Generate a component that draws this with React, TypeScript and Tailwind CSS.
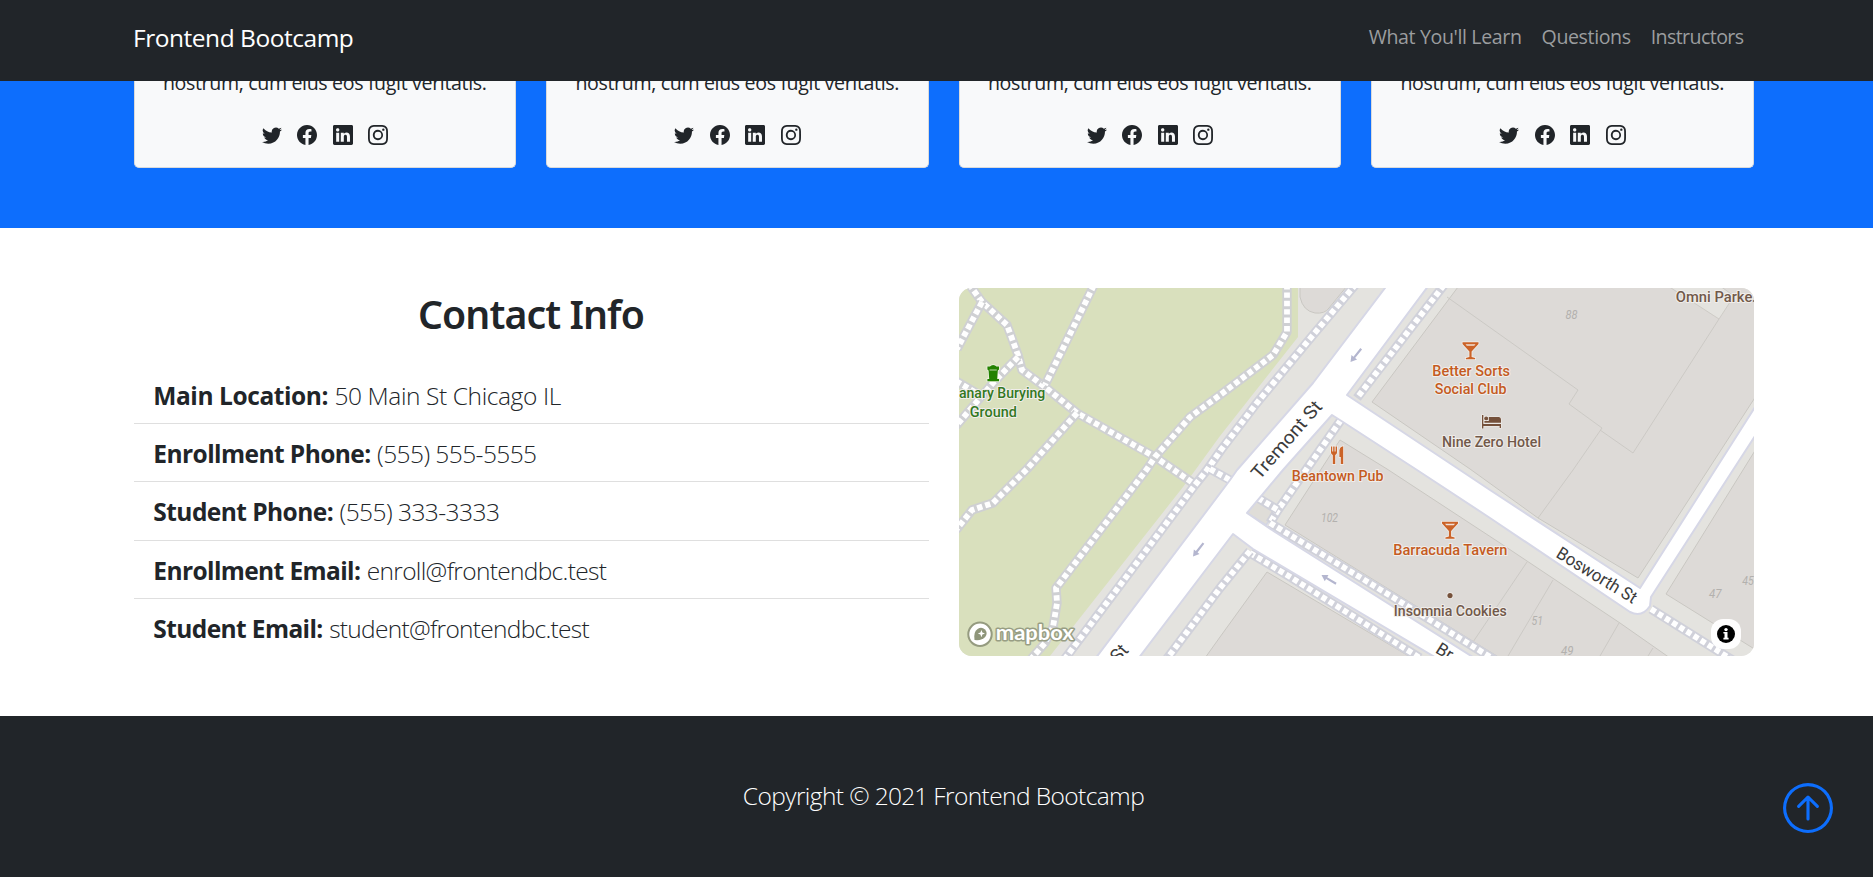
import React from "react";
import {
  BsTwitter,
  BsFacebook,
  BsLinkedin,
  BsInstagram,
  BsArrowUpCircle,
} from "react-icons/bs";

const contacts = [
  { label: "Main Location:", value: "50 Main St Chicago IL", labelTracking: "tracking-[-0.42px]", valueTracking: "tracking-[-0.4px]" },
  { label: "Enrollment Phone:", value: "(555) 555-5555", labelTracking: "tracking-[-0.56px]", valueTracking: "tracking-[-0.57px]" },
  { label: "Student Phone:", value: "(555) 333-3333", labelTracking: "tracking-[-0.55px]", valueTracking: "tracking-[-0.54px]" },
  { label: "Enrollment Email:", value: "enroll@frontendbc.test", labelTracking: "tracking-[-0.6px]", valueTracking: "tracking-[-0.67px]" },
  { label: "Student Email:", value: "student@frontendbc.test", labelTracking: "tracking-[-0.6px]", valueTracking: "tracking-[-0.71px]" },
];

const footpaths = [
  "M969 284 L982 302 L1007 325 L1018 355 L1022 370 L1045 387 L1077 413 L1155 457 L1193 483",
  "M982 302 L957 349",
  "M1018 357 L993 383 L956 426",
  "M956 381 L978 394",
  "M1094 285 L1045 385",
  "M1077 413 L1027 469 L993 503 L972 510 L956 530",
  "M1287 284 L1287 332 L1273 355 L1220 395 L1190 417 L1155 457 L1147 469 L1056 588 L1057 603 L1053 627 L1045 643 L1031 659",
];

const sidewalks = [
  "M1356 284 L1313 335 L1256 404 L1221 450 L1207 470 L1195 485 L1064 660",
  "M1210 469 L1230 480",
  "M1444 285 L1357 398",
  "M1341 420 L1308 467 L1278 510 L1270 523",
  "M1258 498 L1278 510",
  "M1270 523 L1353 573 L1427 618 L1495 660",
  "M1250 553 L1287 575 L1420 658",
  "M1250 551 L1220 588 L1166 660",
  "M1651 609 L1734 661",
];

function Trail({ d, casing }: { d: string; casing: string }) {
  return (
    <g fill="none" strokeLinejoin="round">
      <path d={d} stroke={casing} strokeWidth="9.4" />
      <path d={d} stroke="#ffffff" strokeWidth="5.8" strokeDasharray="5.4 3" />
    </g>
  );
}

function Place({ x, y, w, color, children }: { x: number; y: number; w: number; color: string; children: string }) {
  return (
    <text
      x={x}
      y={y}
      textLength={w}
      lengthAdjust="spacingAndGlyphs"
      fill={color}
      stroke="#f1eeeb"
      strokeWidth="2"
      strokeLinejoin="round"
      paintOrder="stroke"
      fontSize="14.2"
      fontWeight="500"
    >
      {children}
    </text>
  );
}

function Martini({ x, y }: { x: number; y: number }) {
  return (
    <g transform={`translate(${x} ${y})`} fill="#cb6328" stroke="#f1eeeb" strokeWidth="1.5" paintOrder="stroke">
      <path d="M-8 0 H8 V1.6 L1.1 9.2 V14.8 L4.6 15.6 V17 H-4.6 V15.6 L-1.1 14.8 V9.2 L-8 1.6 Z" />
      <path d="M-5 1.9 H5 L3.7 3.4 H-3.7 Z" fill="#f1e0d6" stroke="none" />
    </g>
  );
}

function Arrow({ x, y, angle }: { x: number; y: number; angle: number }) {
  return (
    <g transform={`translate(${x} ${y}) rotate(${angle})`} fill="#b4b6cf">
      <path d="M0 0 L6 -3.6 V-1.1 H17 V1.1 H6 V3.6 Z" />
    </g>
  );
}

function StreetMap() {
  return (
    <svg viewBox="959 288 795 368" className="block h-[368px] w-[795px] rounded-[12.5px] font-['Roboto',sans-serif]">
      <rect x="959" y="288" width="795" height="368" fill="#e4e3df" />
      <path d="M959 288 H1298 V337 L1220 436 L1183 487 L1050 656 H959 Z" fill="#d9e0bd" />

      <g fill="#dddad7" stroke="#c9c7c2" strokeWidth="1">
        <path d="M1300 286 V297 Q1303 311 1315 313 Q1325 314 1329 308 L1347 286 Z" />
        <path d="M1458 287 L1372 402 L1470 469 L1538 518 L1638 578 L1708 470 L1756 396 V286 Z" />
        <path d="M1340 440 L1387 469 L1500 543 L1620 623 L1670 658 H1500 L1285 525 Z" />
        <path d="M1267 572 L1220 637 L1205 658 H1412 Z" />
        <path d="M1756 449 L1666 594 L1756 650 Z" />
      </g>
      <path d="M1668 286 L1719 319 L1734 296 L1720 286 Z" fill="#e4e3df" stroke="#c9c7c2" strokeWidth="0.8" />
      <g fill="none" stroke="#cac7c3" strokeWidth="0.9">
        <path d="M1447 297 L1578 390 L1569 404 L1602 428 L1573 470 L1538 518" />
        <path d="M1600 430 L1633 453 L1719 319" />
        <path d="M1527 562 L1473 642" />
        <path d="M1553 580 L1508 656" />
        <path d="M1619 623 L1600 656" />
        <path d="M1653 648 L1648 656" />
      </g>

      {footpaths.map((d) => (
        <Trail key={d} d={d} casing="#cfd0d3" />
      ))}

      <path d="M1259 497 L1277 510 L1266 525 L1247 513 Z" fill="#dfddd8" stroke="#d3d5e3" strokeWidth="1.6" />
      {sidewalks.map((d) => (
        <Trail key={d} d={d} casing="#d0d1da" />
      ))}

      <path
        d="M1385 288 L1313 383 L1237 470 L1230 480 L1095 659 H1138 L1233 534 L1253 549 L1438 659 H1476 L1275 532 L1247 513 L1283 470 L1332 415 L1343 422 L1417 470 L1490 518 L1630 612 Q1642 618 1650 606 L1651 597 L1733 470 L1757 433 V404 L1715 470 L1640 588 L1490 490 L1460 470 L1347 395 L1429 285 H1387 Z"
        fill="#ffffff"
        stroke="#d6d7e6"
        strokeWidth="2"
        strokeLinejoin="round"
      />

      <Arrow x={1350.5} y={362} angle={-51} />
      <Arrow x={1193} y={556.5} angle={-52} />
      <Arrow x={1321.5} y={575} angle={31} />

      <g fill="#b3b1ae" fontStyle="italic" fontSize="12.6">
        <text x="1565.5" y="319" textLength="12" lengthAdjust="spacingAndGlyphs">88</text>
        <text x="1321" y="522.3" textLength="17" lengthAdjust="spacingAndGlyphs">102</text>
        <text x="1709" y="598" textLength="12.5" lengthAdjust="spacingAndGlyphs">47</text>
        <text x="1742.3" y="585" textLength="11.5" lengthAdjust="spacingAndGlyphs">45</text>
        <text x="1531.5" y="625" textLength="11.5" lengthAdjust="spacingAndGlyphs">51</text>
        <text x="1561" y="655" textLength="12.5" lengthAdjust="spacingAndGlyphs">49</text>
      </g>

      <g fill="#3c3c3c" stroke="#ffffff" strokeWidth="2" paintOrder="stroke" fontSize="18.5">
        <text transform="translate(1259.5 480.5) rotate(-49)" textLength="97" lengthAdjust="spacingAndGlyphs">Tremont St</text>
        <text transform="translate(1129.5 651) rotate(-49)" textAnchor="end">St</text>
        <text transform="translate(1555 556.5) rotate(31.5)" textLength="91" lengthAdjust="spacingAndGlyphs" fontSize="17.5">Bosworth St</text>
        <text transform="translate(1434.5 652) rotate(32)" fontSize="17.5">Br</text>
      </g>

      <g fill="#238200" stroke="#eef0e0" strokeWidth="1.6" paintOrder="stroke">
        <path d="M987.4 369.5 V366.6 H990 Q991 365 993.2 365 Q995.4 365 996.4 366.6 H999 V369.5 L997.8 370.6 L997.2 379 H999 V381.2 H987.4 V379 H989.2 L988.6 370.6 Z" />
        <path d="M989.6 370 H996.8" stroke="#cfe0b8" strokeWidth="0.9" />
      </g>
      <Place x={959} y={398.3} w={86.3} color="#33781f">anary Burying</Place>
      <Place x={969.8} y={416.7} w={47} color="#33781f">Ground</Place>

      <Martini x={1470.5} y={342.3} />
      <Place x={1432.3} y={376.3} w={77.7} color="#c45b22">Better Sorts</Place>
      <Place x={1434.8} y={394.3} w={71.7} color="#c45b22">Social Club</Place>

      <g fill="#75513b" stroke="#f1eeeb" strokeWidth="1.2" paintOrder="stroke">
        <path d="M1482 415 H1483.4 V424 H1501 V428 H1499.6 V426 H1483.4 V428.5 H1482 Z" />
        <circle cx="1486.2" cy="418.4" r="2" />
        <path d="M1484.4 421 H1488.8 V417 H1498.5 Q1501 417 1501 420 V422.8 H1484.4 Z" />
      </g>
      <Place x={1442} y={446.7} w={99} color="#71594a">Nine Zero Hotel</Place>

      <g fill="#cb6328" stroke="#f1eeeb" strokeWidth="1.5" paintOrder="stroke">
        <path d="M1331 446.5 H1332.2 V451.5 H1333.2 V446.5 H1334.6 V451.5 H1335.6 V446.5 H1337 V452.5 Q1337 454.2 1335.2 455 V464 H1332.8 V455 Q1331 454.2 1331 452.5 Z" />
        <path d="M1343.2 446.2 V464 H1340.8 V457 H1339.4 V450.5 Q1339.8 446.6 1343.2 446.2 Z" />
      </g>
      <Place x={1291.8} y={480.7} w={91.7} color="#c45b22">Beantown Pub</Place>

      <Martini x={1450} y={521.8} />
      <Place x={1393.3} y={555} w={114} color="#c45b22">Barracuda Tavern</Place>

      <circle cx="1450" cy="595.6" r="2.6" fill="#75513b" stroke="#f1eeeb" strokeWidth="1.4" paintOrder="stroke" />
      <Place x={1393.8} y={616} w={113} color="#71594a">Insomnia Cookies</Place>
      <Place x={1675.8} y={301.8} w={76.5} color="#71594a">Omni Parke</Place>
      <path d="M1752.8 301.8 V300.2 H1754 V301.8 Z" fill="#71594a" />

      <g>
        <circle cx="980" cy="634.3" r="11.7" fill="#ffffff" stroke="#959b80" strokeWidth="2" />
        <path d="M974.5 640 Q973.2 632 977.6 629 Q981.6 626.4 985 629.6 Q988.2 633 985.2 637 Q982 640.8 974.5 640 Z" fill="#8f967a" />
        <path d="M981.4 630 L982.4 632.6 L985 633.6 L982.4 634.6 L981.4 637.2 L980.4 634.6 L977.8 633.6 L980.4 632.6 Z" fill="#ffffff" />
        <text
          x="995.8"
          y="640.4"
          textLength="78"
          lengthAdjust="spacingAndGlyphs"
          fill="#ffffff"
          stroke="#989e84"
          strokeWidth="3"
          strokeLinejoin="round"
          paintOrder="stroke"
          fontSize="20.5"
          className="font-['Lato',sans-serif] font-bold"
        >
          mapbox
        </text>
      </g>

      <rect x="1711" y="619" width="30" height="30" rx="12" fill="#ffffff" fillOpacity="0.95" />
      <circle cx="1726" cy="634" r="9" fill="#000000" />
      <circle cx="1726" cy="629.6" r="1.7" fill="#ffffff" />
      <path d="M1723.4 632 H1727.5 V637.8 H1728.6 V639.6 H1723.4 V637.8 H1724.5 V633.6 H1723.4 Z" fill="#ffffff" />
    </svg>
  );
}

function InstructorCard() {
  return (
    <article className="flex flex-col items-center rounded-b-[5px] border border-t-0 border-[#d9dadb] bg-[#f8f9fa]">
      <p className="-mt-[13.5px] whitespace-nowrap text-[19.6px] leading-[30px] tracking-[-0.35px]">
        nostrum, cum eius eos fugit veritatis.
      </p>
      <div className="mt-[27.5px] flex gap-[15.5px] text-[20px]">
        <BsTwitter />
        <BsFacebook />
        <BsLinkedin />
        <BsInstagram />
      </div>
    </article>
  );
}

export default function App() {
  return (
    <div className="flex h-[877px] flex-col overflow-hidden bg-white font-['Open_Sans',sans-serif] text-[#212529]">
      <header className="relative z-10 h-[81px] shrink-0 bg-[#212529]">
        <div className="ml-[133px] flex w-[1620px] justify-between">
          <a href="#" className="pt-[19px] text-[24.5px] leading-[37.5px] tracking-[-0.47px] text-white">
            Frontend Bootcamp
          </a>
          <nav className="flex gap-5 pr-[9.5px] pt-[21.5px] text-[19.6px] leading-[30px] text-[#9b9d9f]">
            <a href="#" className="tracking-[-0.38px]">What You'll Learn</a>
            <a href="#" className="tracking-[-0.4px]">Questions</a>
            <a href="#" className="tracking-[-0.59px]">Instructors</a>
          </nav>
        </div>
      </header>

      <section className="h-[147px] shrink-0 bg-[#0d6efd]">
        <div className="ml-[133.5px] grid h-[87px] w-[1620px] grid-cols-4 gap-[30px]">
          <InstructorCard />
          <InstructorCard />
          <InstructorCard />
          <InstructorCard />
        </div>
      </section>

      <section className="ml-[134px] grid h-[488px] w-[1620px] shrink-0 grid-cols-2 gap-[30px] py-[60px]">
        <div>
          <h2 className="-ml-px pt-[2px] text-center font-['Noto_Sans',sans-serif] text-[39.2px] font-semibold leading-[48px] tracking-[-0.92px]">
            Contact Info
          </h2>
          <ul className="mt-[27.4px] divide-y divide-[#dfdfdf]">
            {contacts.map((c) => (
              <li key={c.label} className="flex h-[58.4px] items-baseline whitespace-nowrap pl-[19.3px] pt-[11.3px] text-[24.5px] leading-[37.5px]">
                <span className={`font-bold ${c.labelTracking}`}>{c.label}</span>
                <span className={`ml-[6.4px] font-light ${c.valueTracking}`}>{c.value}</span>
              </li>
            ))}
          </ul>
        </div>
        <StreetMap />
      </section>

      <footer className="relative h-[161px] shrink-0 bg-[#212529] text-white">
        <p className="ml-[133.5px] w-[1620px] pt-[60.5px] text-center text-[24.5px] font-light leading-[37.5px] tracking-[-0.59px]">
          Copyright © <span className="tracking-[-0.8px]">2021</span> Frontend Bootcamp
        </p>
        <a href="#" className="absolute right-[40px] bottom-[44px] text-[50px] text-[#0d6efd]">
          <BsArrowUpCircle />
        </a>
      </footer>
    </div>
  );
}
